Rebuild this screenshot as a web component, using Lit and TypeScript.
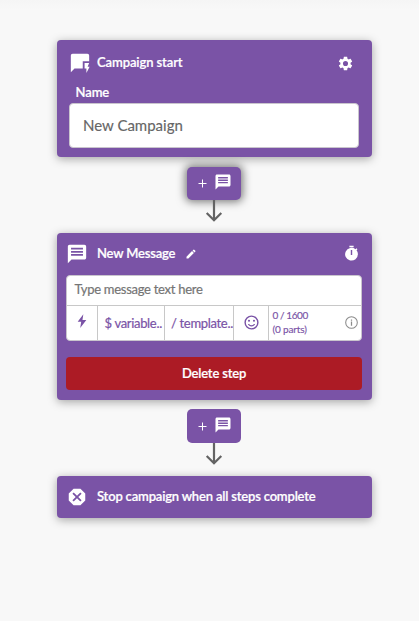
import { LitElement, html, css, svg } from "lit";
import { customElement, property } from "lit/decorators.js";

const paths: Record<string, unknown> = {
  quickreply: svg`<path d="M22 4c0-1.1-.9-2-2-2H4c-1.1 0-2 .9-2 2v18l4-4h9v-8h7V4z"/><path d="M22.5 16h-2.2l1.7-4h-5v6h2v5l3.5-7z"/>`,
  gear: svg`<path d="M19.14 12.94c.04-.3.06-.61.06-.94 0-.32-.02-.64-.07-.94l2.03-1.58c.18-.14.23-.41.12-.61l-1.92-3.32c-.12-.22-.37-.29-.59-.22l-2.39.96c-.5-.38-1.03-.7-1.62-.94l-.36-2.54c-.04-.24-.24-.41-.48-.41h-3.84c-.24 0-.43.17-.47.41l-.36 2.54c-.59.24-1.13.57-1.62.94l-2.39-.96c-.22-.08-.47 0-.59.22L2.74 8.87c-.12.21-.08.47.12.61l2.03 1.58c-.05.3-.09.63-.09.94s.02.64.07.94l-2.03 1.58c-.18.14-.23.41-.12.61l1.92 3.32c.12.22.37.29.59.22l2.39-.96c.5.38 1.03.7 1.62.94l.36 2.54c.05.24.24.41.48.41h3.84c.24 0 .44-.17.47-.41l.36-2.54c.59-.24 1.13-.56 1.62-.94l2.39.96c.22.08.47 0 .59-.22l1.92-3.32c.12-.22.07-.47-.12-.61l-2.01-1.58zM12 15.6a3.6 3.6 0 1 1 0-7.2 3.6 3.6 0 0 1 0 7.2z"/>`,
  chat: svg`<path fill-rule="evenodd" d="M20 2H4c-1.1 0-2 .9-2 2v18l4-4h14c1.1 0 2-.9 2-2V4c0-1.1-.9-2-2-2zM5.500 5.300h13v1.900h-13zm0 3.300h13v1.900h-13zm0 3.300h13v1.900h-13z"/>`,
  pencil: svg`<path d="M3 17.250V21h3.750L17.810 9.940l-3.750-3.750L3 17.250zM20.710 7.040a1 1 0 0 0 0-1.410l-2.340-2.340a1 1 0 0 0-1.410 0l-1.830 1.830 3.750 3.750 1.830-1.830z"/>`,
  timer: svg`<path d="M19.030 7.390l1.420-1.420c-.45-.51-.9-.97-1.410-1.410L17.620 6A9 9 0 1 0 21 13c0-2.120-.74-4.070-1.970-5.610M13 14h-2V7h2v7m2-13H9v2h6V1z"/>`,
  bolt: svg`<path d="M14 2L5.500 13.300h5.300L9.300 22.500 18.500 10.500h-5.800z"/>`,
  smile: svg`<path fill-rule="evenodd" d="M12 2a10 10 0 1 0 0 20 10 10 0 0 0 0-20zm0 18a8 8 0 1 1 0-16 8 8 0 0 1 0 16z"/><circle cx="8.500" cy="9.500" r="1.500"/><circle cx="15.500" cy="9.500" r="1.500"/><path d="M12 17.500c2.330 0 4.310-1.460 5.110-3.500h-1.670a4 4 0 0 1-6.880 0H6.890c.8 2.040 2.780 3.500 5.110 3.500z"/>`,
  info: svg`<circle cx="12" cy="12" r="9.300" fill="none" stroke="currentColor" stroke-width="1.700"/><path d="M11 10.500h2v6.500h-2zM11 7h2v2h-2z"/>`,
  stop: svg`<path fill-rule="evenodd" d="M8.270 3L3 8.270v7.460L8.270 21h7.460L21 15.730V8.270L15.730 3zM8.400 7L12 10.600 15.600 7 17 8.400 13.400 12l3.600 3.600-1.400 1.400L12 13.400 8.400 17 7 15.600l3.600-3.600L7 8.400z"/>`,
};

@customElement("flow-icon")
class FlowIcon extends LitElement {
  @property() name = "";
  static styles = css`
    :host { display: block; flex: none; width: 22px; height: 22px; }
    svg { display: block; width: 100%; height: 100%; fill: currentColor; overflow: visible; }
  `;
  render() {
    return html`<svg viewBox="0 0 24 24" aria-hidden="true">${paths[this.name]}</svg>`;
  }
}

@customElement("flow-connector")
class FlowConnector extends LitElement {
  static styles = css`
    :host { display: flex; flex-direction: column; align-items: center; }
    .add {
      box-sizing: border-box; width: 54px; height: 33px; border-radius: 5px;
      background: #7a53a6; color: #fff; display: flex; align-items: center;
      padding: 0 10px 3px 11px; justify-content: space-between;
    }
    :host([tall]) .add { height: 34px; padding-bottom: 2px; }
    :host([raised]) .add { box-shadow: 0 0 8px 2px rgba(0, 0, 0, 0.5); }
    .plus { width: 9px; height: 9px; margin-top: 3px; stroke: #fff; stroke-width: 1; }
    flow-icon { width: 18px; height: 18px; margin-right: -1px; }
    .arrow { display: block; width: 18px; height: 22px; fill: none; stroke: #636363; stroke-width: 2.2; }
  `;
  render() {
    return html`
      <div class="add">
        <svg class="plus" viewBox="0 0 9 9"><path d="M4.500 .5v8M.5 4.500h8"/></svg>
        <flow-icon name="chat"></flow-icon>
      </div>
      <svg class="arrow" viewBox="0 0 18 22"><path d="M9 0v20M1.700 13L9 20.300 16.300 13"/></svg>
    `;
  }
}

@customElement("app-root")
class AppRoot extends LitElement {
  static styles = css`
    :host {
      display: flex; flex-direction: column; align-items: center; box-sizing: border-box;
      height: 621px; padding: 40px 47px 0 57px; overflow: hidden;
      background: linear-gradient(#f5f5f5, #f8f8f8 10px);
      font: 400 13px/20px Lato, sans-serif; color: #fff;
    }
    .card {
      box-sizing: border-box; width: 315px; border-radius: 4px; background: #7a53a6;
      box-shadow: 0 2px 10px rgba(0, 0, 0, 0.34);
    }
    .start { height: 117px; padding: 12px 13px 0 12px; }
    .message { height: 167px; padding: 10px 10px 0 9px; }
    .stop { height: 42px; padding: 0 9px; display: flex; align-items: center; }
    .head { display: flex; align-items: center; height: 22px; }
    .title, .label, .delete {
      font-weight: 600; letter-spacing: -0.18px; -webkit-text-stroke: 0.2px #fff;
    }
    .title { padding-bottom: 2px; }
    .start .title { margin-left: 6px; letter-spacing: -0.1px; }
    .start .gear { width: 17px; height: 17px; margin: 0 5px 0 auto; }
    .label { display: block; margin: 8px 0 0 6.5px; height: 21px; letter-spacing: -0.1px; }
    .input {
      box-sizing: border-box; width: 290px; height: 45px; border: 1px solid #c9c5cd;
      border-radius: 4px; background: #fff; color: #666; font-size: 15px; line-height: 43px;
      padding: 0 13px; -webkit-text-stroke: 0.15px #666;
    }
    .message .title { margin-left: 9px; }
    .pencil { width: 12px; height: 12px; margin-left: 10px; }
    .timer { width: 17px; height: 17px; margin: -1px 2px 0 auto; }
    .editor {
      box-sizing: border-box; width: 296px; height: 66px; margin-top: 10px;
      border: 1px solid #c9c5cd; border-radius: 4px; background: #fff; overflow: hidden;
    }
    .placeholder {
      height: 29px; line-height: 27px; padding-left: 7.5px; color: #757575;
      letter-spacing: -0.28px; -webkit-text-stroke: 0.2px #757575;
    }
    .tools {
      display: grid; grid-template-columns: 31px 67px 69px 35px 1fr; height: 36px;
      border-top: 1px solid #c8c8c8; box-sizing: border-box; color: #7a53a6;
    }
    .tool {
      display: flex; align-items: center; justify-content: center; box-sizing: border-box;
      border-right: 1px solid #c8c8c8; min-width: 0; overflow: hidden; white-space: nowrap;
    }
    .text {
      justify-content: flex-start; padding: 0 0 2px 6.5px; letter-spacing: -0.32px;
      -webkit-text-stroke: 0.2px #7a53a6;
    }
    .text + .text { padding-left: 6px; }
    .tool:last-child { border: 0; justify-content: space-between; padding: 0 3px 0 3.5px; }
    .tool flow-icon { width: 17px; height: 17px; margin-bottom: 2px; }
    .tool .bolt { width: 16px; height: 16px; margin-bottom: 5px; }
    .tool .info { width: 15px; height: 15px; margin: 0 -1px 2px 0; color: #8b8b8b; }
    .count {
      font-size: 10px; line-height: 14px; padding-bottom: 3px; letter-spacing: -0.15px;
      -webkit-text-stroke: 0.15px #7a53a6;
    }
    .used { letter-spacing: -0.42px; }
    .delete {
      display: flex; align-items: center; justify-content: center; width: 296px; height: 33px;
      margin-top: 16px; border-radius: 4px; background: #ac1b25;
      box-sizing: border-box; padding-bottom: 1px;
    }
    .stop .title { margin-left: 9px; }
    flow-connector { height: 66px; margin: 10px 1px 0 0; }
    flow-connector[tall] { height: 67px; margin-top: 9px; }
  `;
  render() {
    return html`
      <section class="card start">
        <div class="head">
          <flow-icon name="quickreply"></flow-icon>
          <span class="title">Campaign start</span>
          <flow-icon class="gear" name="gear"></flow-icon>
        </div>
        <span class="label">Name</span>
        <div class="input">New Campaign</div>
      </section>
      <flow-connector raised></flow-connector>
      <section class="card message">
        <div class="head">
          <flow-icon name="chat"></flow-icon>
          <span class="title">New Message</span>
          <flow-icon class="pencil" name="pencil"></flow-icon>
          <flow-icon class="timer" name="timer"></flow-icon>
        </div>
        <div class="editor">
          <div class="placeholder">Type message text here</div>
          <div class="tools">
            <div class="tool"><flow-icon class="bolt" name="bolt"></flow-icon></div>
            <div class="tool text">$ variable..</div>
            <div class="tool text">/ template..</div>
            <div class="tool"><flow-icon name="smile"></flow-icon></div>
            <div class="tool">
              <div class="count"><span class="used">0 / 1600</span><br />(0 parts)</div>
              <flow-icon class="info" name="info"></flow-icon>
            </div>
          </div>
        </div>
        <div class="delete">Delete step</div>
      </section>
      <flow-connector tall></flow-connector>
      <section class="card stop">
        <flow-icon name="stop"></flow-icon>
        <span class="title">Stop campaign when all steps complete</span>
      </section>
    `;
  }
}
